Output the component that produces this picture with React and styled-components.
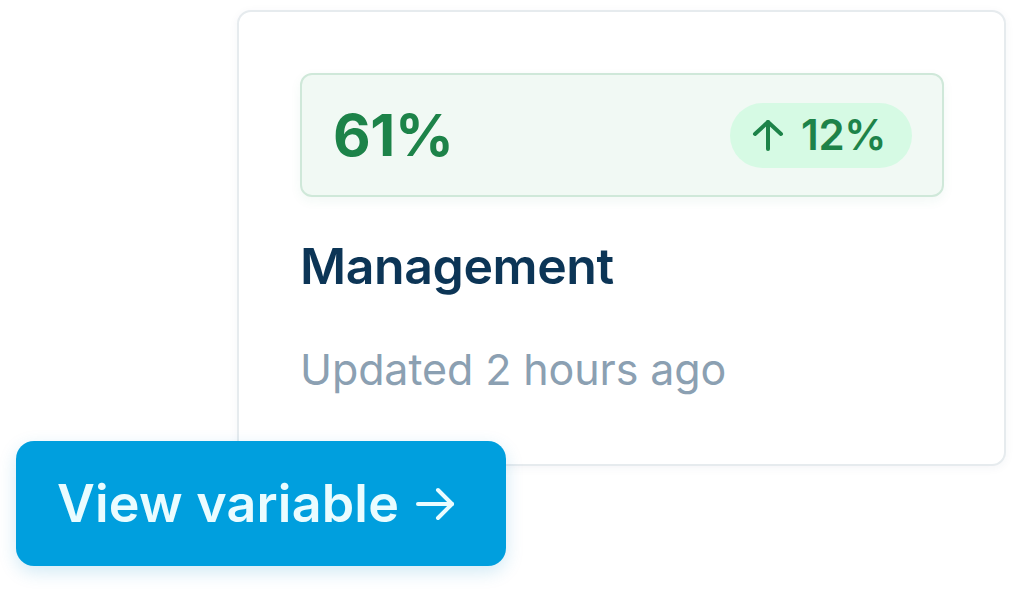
import React from 'react';
import styled, { createGlobalStyle } from 'styled-components';

const GlobalStyle = createGlobalStyle`
  html, body {
    margin: 0;
    padding: 0;
    background: #ffffff;
  }
  body {
    font-family: Inter, "Noto Sans", "Liberation Sans", sans-serif;
    -webkit-font-smoothing: antialiased;
  }
`;

const Stage = styled.div`
  width: 1024px;
  height: 610px;
  padding: 10px 0 0 16px;
  box-sizing: border-box;
  overflow: hidden;
`;

const Card = styled.div`
  box-sizing: border-box;
  width: 769px;
  height: 456px;
  margin-left: 221px;
  padding: 61px 60px 0 61px;
  background: #ffffff;
  border: 2px solid #e6ebee;
  border-radius: 14px;
  box-shadow: 0 2px 10px rgba(30, 60, 90, 0.05);
`;

const StatBox = styled.div`
  box-sizing: border-box;
  height: 124px;
  display: flex;
  align-items: center;
  justify-content: space-between;
  padding: 0 30px 0 31px;
  background: #f1f9f4;
  border: 2px solid #cfe8d9;
  border-radius: 12px;
  box-shadow: 0 4px 12px rgba(40, 140, 80, 0.06);
`;

const Value = styled.span`
  font-size: 58px;
  font-weight: 700;
  color: #1d8349;
  letter-spacing: -0.3px;
  line-height: 1;
`;

const Badge = styled.span`
  display: flex;
  align-items: center;
  gap: 16px;
  height: 65px;
  padding: 0 26px 0 21px;
  border-radius: 33px;
  background: #d6fae4;
  color: #1d8349;
  font-size: 42px;
  font-weight: 600;
  letter-spacing: -0.4px;
  line-height: 1;
`;

const Title = styled.div`
  margin-top: 39px;
  font-size: 50px;
  line-height: 1.2;
  font-weight: 600;
  color: #0c3556;
  letter-spacing: -0.4px;
`;

const Meta = styled.div`
  margin-top: 48px;
  font-size: 43px;
  line-height: 1.2;
  font-weight: 400;
  color: #8ba0b2;
  letter-spacing: -0.1px;
`;

const ViewButton = styled.button`
  display: flex;
  align-items: center;
  gap: 16px;
  box-sizing: border-box;
  width: 490px;
  height: 125px;
  margin-top: -25px;
  padding: 0 0 0 41px;
  border: none;
  border-radius: 18px;
  background: #009fde;
  color: #eafcff;
  font-family: Inter, "Noto Sans", "Liberation Sans", sans-serif;
  font-size: 52px;
  font-weight: 600;
  letter-spacing: 0.2px;
  box-shadow: 0 6px 18px rgba(0, 140, 200, 0.18);
  position: relative;
`;

function ArrowUp() {
  return (
    <svg width="34" height="32" viewBox="0 0 34 32" fill="none" stroke="currentColor" strokeWidth="4" strokeLinecap="round" strokeLinejoin="round">
      <path d="M17 30V3" />
      <path d="M4 15L17 3L30 15" />
    </svg>
  );
}

function ArrowRight() {
  return (
    <svg width="40" height="34" viewBox="0 0 40 34" fill="none" stroke="currentColor" strokeWidth="4" strokeLinecap="round" strokeLinejoin="round">
      <path d="M3 17H37" />
      <path d="M23 3L37 17L23 31" />
    </svg>
  );
}

export default function App() {
  return (
    <Stage>
      <GlobalStyle />
      <Card>
        <StatBox>
          <Value>61%</Value>
          <Badge>
            <ArrowUp />
            12%
          </Badge>
        </StatBox>
        <Title>Management</Title>
        <Meta>Updated 2 hours ago</Meta>
      </Card>
      <ViewButton>
        View variable
        <ArrowRight />
      </ViewButton>
    </Stage>
  );
}
